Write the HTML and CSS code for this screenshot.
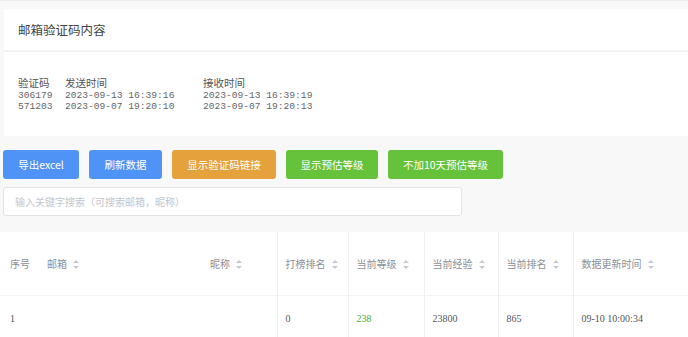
FILE: index.html
```html
<!DOCTYPE html>
<html lang="zh">
  <head>
    <meta charset="UTF-8" />
    <title>邮箱验证码</title>
    <link rel="stylesheet" href="styles.css">
  </head>
  <body>
    <!-- 验证码卡片 -->
    <div class="card">
      <div class="card-header">邮箱验证码内容</div>
      <div class="card-body">
        <div class="code-grid">
          <span class="th">验证码</span><span class="th">发送时间</span><span class="th">接收时间</span>
          <span>306179</span><span>2023-09-13 16:39:16</span><span>2023-09-13 16:39:19</span>
          <span>571203</span><span>2023-09-07 19:20:10</span><span>2023-09-07 19:20:13</span>
        </div>
      </div>
    </div>

    <div class="toolbar">
      <button class="btn blue">导出excel</button>
      <button class="btn blue">刷新数据</button>
      <button class="btn orange">显示验证码链接</button>
      <button class="btn green">显示预估等级</button>
      <button class="btn green">不加10天预估等级</button>
    </div>

    <div class="search">
      <input type="text" placeholder="输入关键字搜索（可搜索邮箱，昵称）" />
    </div>

    <table class="grid">
      <colgroup>
        <col style="width:39px"><col style="width:163px"><col style="width:75px"><col style="width:71px">
        <col style="width:76px"><col style="width:74px"><col style="width:75px"><col>
      </colgroup>
      <thead>
        <tr>
          <th>序号</th>
          <th>邮箱<i class="sort"></i></th>
          <th class="sep-r">昵称<i class="sort"></i></th>
          <th>打榜排名<i class="sort"></i></th>
          <th class="sep-l">当前等级<i class="sort"></i></th>
          <th class="sep-l">当前经验<i class="sort"></i></th>
          <th class="sep-l">当前排名<i class="sort"></i></th>
          <th class="sep-l">数据更新时间<i class="sort"></i></th>
        </tr>
      </thead>
      <tbody>
        <tr>
          <td>1</td>
          <td></td>
          <td class="sep-r"></td>
          <td>0</td>
          <td class="sep-l level">238</td>
          <td class="sep-l">23800</td>
          <td class="sep-l">865</td>
          <td class="sep-l">09-10 10:00:34</td>
        </tr>
      </tbody>
    </table>
  </body>
</html>
```

FILE: styles.css
```css
body {
  margin: 0;
  padding-top: 8px;
  background: #f8f8f8;
  font-family: "Noto Sans CJK SC", "Liberation Sans", sans-serif;
  color: #333;
  border-top: 1px solid #ececec;
}
.card {
  margin-left: 4px;
  background: #fff;
}
.card-header {
  height: 41px;
  line-height: 41px;
  padding-left: 14px;
  font-size: 12.5px;
  color: #444;
  border-bottom: 2px solid #f1f1f1;
}
.card-body {
  height: 84px;
  padding: 24px 0 0 14px;
  box-sizing: border-box;
}
.code-grid {
  display: grid;
  grid-template-columns: 47px 138px auto;
  font-family: "Liberation Mono", monospace;
  font-size: 9.6px;
  line-height: 11px;
  color: #666;
}
.code-grid .th {
  font-family: "Noto Sans CJK SC", sans-serif;
  font-size: 10.5px;
  line-height: 14px;
  color: #555;
}
/* 按钮 */
.toolbar {
  display: flex;
  gap: 10px;
  padding: 14px 0 0 3px;
}
.btn {
  height: 29px;
  border: none;
  border-radius: 3px;
  color: #fff;
  font-family: "Noto Sans CJK SC", sans-serif;
  font-size: 10.5px;
  padding: 0;
}
.btn:nth-child(1) { width: 76px; }
.btn:nth-child(2) { width: 73px; }
.btn:nth-child(3) { width: 104px; }
.btn:nth-child(4) { width: 92px; }
.btn:nth-child(5) { width: 115px; }
.blue { background: #4f93f7; }
.orange { background: #e5a13b; }
.green { background: #66c23a; }
.search {
  padding: 8px 0 0 3px;
}
.search input {
  width: 459px;
  height: 29px;
  box-sizing: border-box;
  border: 1px solid #e1e3e8;
  border-radius: 3px;
  padding-left: 11px;
  font-family: "Noto Sans CJK SC", sans-serif;
  font-size: 10px;
  outline: none;
}
.search input::placeholder {
  color: #c3c6cc;
}
/* 表格 */
.grid {
  margin-top: 16px;
  width: 100%;
  border-collapse: collapse;
  table-layout: fixed;
  background: #fff;
}
.grid th,
.grid td {
  text-align: left;
  padding: 0 0 0 8px;
  white-space: nowrap;
  overflow: hidden;
}
.grid th:first-child,
.grid td:first-child {
  padding-left: 10px;
}
.grid th {
  height: 63px;
  font-weight: normal;
  font-size: 10px;
  color: #8c8f96;
  border-bottom: 1px solid #f2f3f5;
}
.grid td {
  height: 44px;
  font-family: "Liberation Serif", serif;
  font-size: 10px;
  color: #555;
}
.grid .level {
  color: #4caf2a;
}
.sep-l {
  border-left: 1px solid #eef0f3;
}
.sep-r {
  border-right: 1px solid #eef0f3;
}
.sort {
  display: inline-block;
  position: relative;
  width: 6px;
  height: 9px;
  margin-left: 6px;
  vertical-align: -1px;
}
.sort::before,
.sort::after {
  content: "";
  position: absolute;
  left: 0;
  border-left: 3px solid transparent;
  border-right: 3px solid transparent;
}
.sort::before {
  top: 0;
  border-bottom: 3px solid #c6c9cf;
}
.sort::after {
  bottom: 0;
  border-top: 3px solid #c6c9cf;
}
```
